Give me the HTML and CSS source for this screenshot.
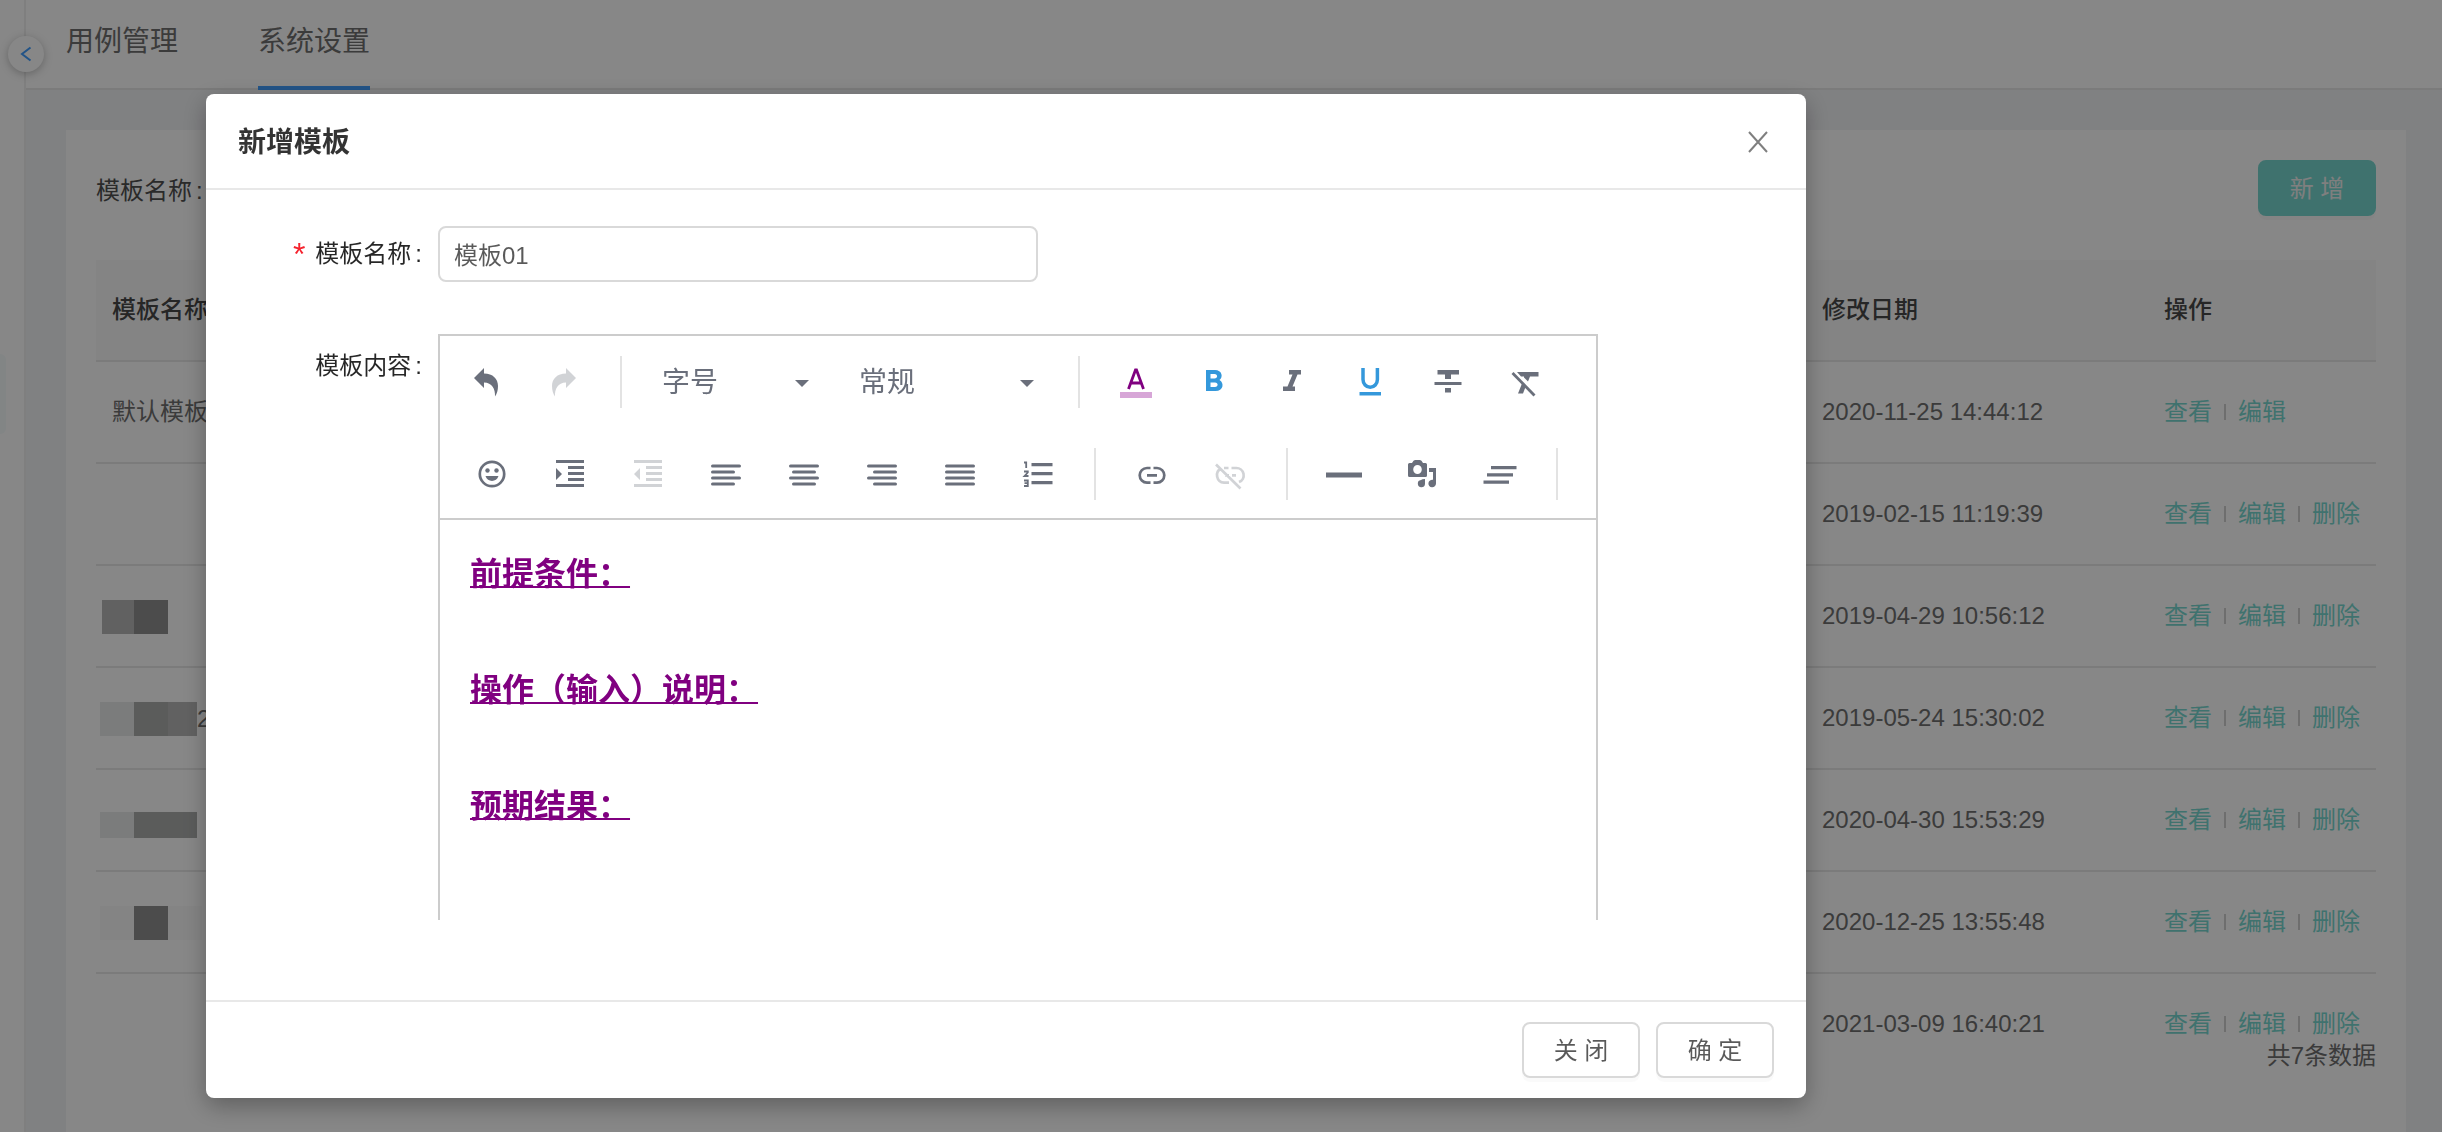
FILE: index.html
```
<!DOCTYPE html>
<html lang="zh-CN">
<head>
<meta charset="utf-8">
<title>系统设置</title>
<link rel="stylesheet" href="styles.css">
</head>
<body>
<div class="app" inert>
  <aside class="sider"><div class="sider-item"></div></aside>
  <button class="collapse" type="button" aria-label="收起">
    <svg width="12" height="16" viewBox="0 0 12 16"><path d="M10.500 1.500L2 8l8.500 6.500" fill="none" stroke="currentColor" stroke-width="2"/></svg>
  </button>
  <div class="main">
    <nav class="tabs">
      <a class="tab" href="#cases">用例管理</a>
      <a class="tab active" href="#settings">系统设置</a>
    </nav>
    <div class="card">
      <div class="search">
        <span class="search-label">模板名称<i class="colon">:</i></span>
        <button class="btn btn-primary" type="button">新 增</button>
      </div>
      <div class="table-wrap">
        <table>
          <colgroup><col class="c-name"><col class="c-date"><col class="c-act"></colgroup>
          <thead><tr><th>模板名称</th><th>修改日期</th><th>操作</th></tr></thead>
          <tbody>
            <tr><td>默认模板</td><td>2020-11-25 14:44:12</td><td><div class="acts"><a href="#v">查看</a><a href="#e">编辑</a></div></td></tr>
            <tr><td></td><td>2019-02-15 11:19:39</td><td><div class="acts"><a href="#v">查看</a><a href="#e">编辑</a><a href="#d">删除</a></div></td></tr>
            <tr><td><div class="mask-text m3"><b class="t2 slim"></b><b class="t4"></b></div></td><td>2019-04-29 10:56:12</td><td><div class="acts"><a href="#v">查看</a><a href="#e">编辑</a><a href="#d">删除</a></div></td></tr>
            <tr><td><div class="mask-text"><b class="t1"></b><b class="t3"></b><b class="t2 narrow"></b><span>2</span></div></td><td>2019-05-24 15:30:02</td><td><div class="acts"><a href="#v">查看</a><a href="#e">编辑</a><a href="#d">删除</a></div></td></tr>
            <tr><td><div class="mask-text short"><b class="t1"></b><b class="t3"></b><b class="t3 narrow"></b></div></td><td>2020-04-30 15:53:29</td><td><div class="acts"><a href="#v">查看</a><a href="#e">编辑</a><a href="#d">删除</a></div></td></tr>
            <tr><td><div class="mask-text"><b class="t0"></b><b class="t4"></b><b class="t0"></b></div></td><td>2020-12-25 13:55:48</td><td><div class="acts"><a href="#v">查看</a><a href="#e">编辑</a><a href="#d">删除</a></div></td></tr>
            <tr><td></td><td>2021-03-09 16:40:21</td><td><div class="acts"><a href="#v">查看</a><a href="#e">编辑</a><a href="#d">删除</a></div></td></tr>
          </tbody>
        </table>
      </div>
      <div class="total">共7条数据</div>
    </div>
  </div>
</div>

<div class="overlay">
  <form class="modal" role="dialog" aria-labelledby="dlg-title">
    <header class="modal-head">
      <h2 id="dlg-title">新增模板</h2>
      <button class="close" type="button" aria-label="关闭">
        <svg width="20" height="22" viewBox="0 0 20 22"><path d="M1 1l18 20M19 1L1 21" fill="none" stroke="currentColor" stroke-width="2"/></svg>
      </button>
    </header>
    <div class="modal-body">
      <div class="field">
        <label class="field-label" for="tpl-name"><span class="req">*</span>模板名称<i class="colon">:</i></label>
        <input class="input" id="tpl-name" type="text" value="模板01">
      </div>
      <div class="field grow">
        <label class="field-label" for="tpl-content">模板内容<i class="colon">:</i></label>
        <div class="editor">
          <div class="toolbar">
            <div class="tools">
              <button class="tool" type="button" aria-label="撤销"><svg viewBox="0 0 36 36"><path d="M6 14L16 4v5.500C25 9.500 30 15 30 22c0 4-1 7.500-3 10.500C27.500 25 24 18.500 16 18.500V24z"/></svg></button>
              <button class="tool off" type="button" aria-label="重做" disabled><svg viewBox="0 0 36 36"><path d="M30 14L20 4v5.500C11 9.500 6 15 6 22c0 4 1 7.500 3 10.500C8.500 25 12 18.500 20 18.500V24z"/></svg></button>
              <span class="sep"></span>
              <button class="drop" type="button">字号<svg class="caret" width="14" height="7" viewBox="0 0 14 7"><path d="M0 0h14L7 7z"/></svg></button>
              <button class="drop wide" type="button">常规<svg class="caret" width="14" height="7" viewBox="0 0 14 7"><path d="M0 0h14L7 7z"/></svg></button>
              <span class="sep"></span>
              <button class="tool" type="button" aria-label="颜色"><svg viewBox="0 0 36 36"><path d="M2 28h32v6H2z" fill="#d7a6d7"/><path d="M10.500 25L17.500 6h1l7 19M13 19h10" fill="none" stroke="#800080" stroke-width="2.800"/></svg></button>
              <button class="tool on" type="button" aria-label="加粗"><svg viewBox="0 0 36 36"><path fill-rule="evenodd" d="M10 6h9c7 0 8.500 7 4.500 10C28.500 19 27.500 27 19.500 27H10zM14.500 10v4.500h4c3.500 0 3.500-4.500 0-4.500zm0 8.500V23h4.500c3.500 0 3.500-4.500 0-4.500z"/></svg></button>
              <button class="tool" type="button" aria-label="斜体"><svg viewBox="0 0 36 36"><path d="M15 6h12v4.500h-3.500L18.500 22.500H21V27H9v-4.500h4.500L18.500 10.500H15z"/></svg></button>
              <button class="tool on" type="button" aria-label="下划线"><svg viewBox="0 0 36 36"><path d="M7.500 28h21.500v3.500H7.500z"/><path d="M11 4v11.500a7.200 7.800 0 0 0 14.400 0V4" fill="none" stroke="currentColor" stroke-width="3.500"/></svg></button>
              <button class="tool" type="button" aria-label="删除线"><svg viewBox="0 0 36 36"><path d="M7.500 6H29v4.500h-8V15h-6v-4.500H7.500zM4.500 18h27v3h-27zM15 24h6v4.500h-6z"/></svg></button>
              <button class="tool" type="button" aria-label="清除样式"><svg viewBox="0 0 36 36"><path d="M9 8h21.500v4.500H22L20 17.500l-4-4V12.500h-3zM14 19.500l3.500 3.500-2.500 6.500h-5z"/><path d="M4.500 9L26.500 31.500" fill="none" stroke="currentColor" stroke-width="2.800"/></svg></button>
            </div>
            <div class="tools second">
              <button class="tool" type="button" aria-label="表情"><svg viewBox="0 0 36 36"><circle cx="18" cy="18" r="12.200" fill="none" stroke="currentColor" stroke-width="2.700"/><circle cx="13.500" cy="14.500" r="2.200"/><circle cx="22.500" cy="14.500" r="2.200"/><path d="M11.500 20h13c-2 6.500-11 6.500-13 0z"/></svg></button>
              <button class="tool" type="button" aria-label="增加缩进"><svg viewBox="0 0 36 36"><path d="M4 4h28v3H4zM16 10h16v3H16zM16 16h16v3H16zM16 22h16v3H16zM4 28h28v3H4zM4 12l6 6-6 6z"/></svg></button>
              <button class="tool off" type="button" aria-label="减少缩进" disabled><svg viewBox="0 0 36 36"><path d="M4 4h28v3H4zM16 10h16v3H16zM16 16h16v3H16zM16 22h16v3H16zM4 28h28v3H4zM10 12l-6 6 6 6z"/></svg></button>
              <button class="tool" type="button" aria-label="居左"><svg viewBox="0 0 36 36"><path class="ln" d="M4.500 10h27M4.500 16h21M4.500 22h27M4.500 28h21"/></svg></button>
              <button class="tool" type="button" aria-label="居中"><svg viewBox="0 0 36 36"><path class="ln" d="M4.500 10h27M7.500 16h21M4.500 22h27M7.500 28h21"/></svg></button>
              <button class="tool" type="button" aria-label="居右"><svg viewBox="0 0 36 36"><path class="ln" d="M4.500 10h27M10.500 16h21M4.500 22h27M10.500 28h21"/></svg></button>
              <button class="tool" type="button" aria-label="两端"><svg viewBox="0 0 36 36"><path class="ln" d="M4.500 10h27M4.500 16h27M4.500 22h27M4.500 28h27"/></svg></button>
              <button class="tool" type="button" aria-label="有序列表"><svg viewBox="0 0 36 36"><path d="M11.500 7h21v3.200h-21zM11.500 16h21v3.200h-21zM11.500 25h21v3.200h-21z"/><path d="M4 6.500h2.200V12M4 15.500h3.800v1L4.500 20H8.500M4 24.500h3.800v5.500H4M4.500 27.200h3" fill="none" stroke="currentColor" stroke-width="1.800"/></svg></button>
              <span class="sep"></span>
              <button class="tool" type="button" aria-label="链接"><svg viewBox="0 0 36 36"><path d="M16.500 12H13a7.300 7.300 0 0 0 0 14.600h3.500M19.500 12H23a7.300 7.300 0 0 1 0 14.600h-3.500M13 19.300h10" fill="none" stroke="currentColor" stroke-width="2.700"/></svg></button>
              <button class="tool off" type="button" aria-label="取消链接" disabled><svg viewBox="0 0 36 36"><path d="M9 12.500a7.500 7.500 0 0 0 3 14.100h5M19.500 12H24a7.300 7.300 0 0 1 3 14.100M12 12h4.500M13 19.300h4M20 19.300h4M4 8.500l24.500 24" fill="none" stroke="currentColor" stroke-width="2.700"/></svg></button>
              <span class="sep"></span>
              <button class="tool" type="button" aria-label="水平线"><svg viewBox="0 0 36 36"><path d="M0 16.500h36v5H0z"/></svg></button>
              <button class="tool" type="button" aria-label="媒体"><svg viewBox="0 0 36 36"><path fill-rule="evenodd" d="M4 8.500Q4 7 5.500 7H8q1.500-3 3-3h5q1.500 0 3 3h2.500Q23 7 23 8.500v11q0 1.500-1.500 1.500h-16Q4 21 4 19.500zM13.500 9a4.300 4.500 0 1 0 0 9 4.300 4.500 0 0 0 0-9z"/><path d="M25 12h7v15.500a3.800 3.800 0 1 1-3-3.700V16h-4zM21 23v5a3.600 3.600 0 1 1-4-4q1-1 4-1z"/></svg></button>
              <button class="tool" type="button" aria-label="清除"><svg viewBox="0 0 36 36"><path d="M9 10h25.500v3.200H9zM5 17.300h26v3.200H5zM1.500 24.600H27v3.200H1.500z"/></svg></button>
              <span class="sep"></span>
            </div>
          </div>
          <div class="content" id="tpl-content" contenteditable="true" spellcheck="false">
            <p>前提条件：</p>
            <p>操作（输入）说明：</p>
            <p>预期结果：</p>
          </div>
        </div>
      </div>
    </div>
    <footer class="modal-foot">
      <button class="btn" type="button">关 闭</button>
      <button class="btn" type="submit">确 定</button>
    </footer>
  </form>
</div>
</body>
</html>
```
FILE: styles.css
```
* { box-sizing: border-box; }
html, body { height: 100%; }
body {
  margin: 0;
  overflow: hidden;
  font: 24px/36px "Liberation Sans", "Noto Sans CJK SC", sans-serif;
  color: rgba(0, 0, 0, .65);
  background: #fff;
}
button, input { font: inherit; color: inherit; }
button { padding: 0; border: 0; background: none; }
a { text-decoration: none; color: inherit; }
svg { display: block; fill: currentColor; }
i { font-style: normal; }
.colon { margin: 0 16px 0 4px; }

.app { display: flex; position: relative; height: 100%; color: #707070; }
.sider { width: 26px; border-right: 2px solid #f0f0f0; padding-top: 354px; }
.sider-item { width: 6px; height: 80px; border-radius: 0 8px 8px 0; background: #f5fbfc; }
.collapse {
  position: absolute;
  left: 8px;
  top: 36px;
  display: grid;
  place-items: center;
  width: 36px;
  height: 36px;
  border-radius: 50%;
  background: #fff;
  color: #409eff;
  box-shadow: 0 2px 8px rgba(0, 0, 0, .25);
}
.main { flex: 1; display: flex; flex-direction: column; background: #f2f3f6; }
.tabs {
  display: flex;
  gap: 80px;
  height: 90px;
  padding-left: 40px;
  border-bottom: 2px solid #e8e8e8;
  background: #fff;
  font-size: 28px;
}
.tab { height: 90px; padding-top: 24px; }
.tab.active { border-bottom: 4px solid #409eff; }

.card { flex: 1; margin: 40px 36px 0 40px; padding: 30px; background: #fff; }
.search { display: flex; justify-content: space-between; align-items: center; height: 56px; margin-bottom: 44px; color: #505050; }
.search-label { padding-top: 6px; }
.btn {
  min-width: 118px;
  height: 56px;
  padding: 2px 28px 0;
  border: 2px solid #d9d9d9;
  border-radius: 8px;
  background: #fff;
  box-shadow: 0 4px 0 rgba(0, 0, 0, .02);
}
.btn-primary { border-color: #78d8d0; background: #78d8d0; color: #f0f0f0; }

.table-wrap { height: 778px; overflow: hidden; }
table { width: 100%; table-layout: fixed; border-collapse: separate; border-spacing: 0; }
.c-name { width: 75%; }
.c-date { width: 15%; }
.c-act { width: 10%; }
th, td { height: 102px; padding: 0 16px; border-bottom: 2px solid #e8e8e8; text-align: left; }
th { background: #fafafa; font-weight: 500; color: #484848; }
.acts { display: flex; align-items: center; color: #78d8d0; }
.acts a + a { display: flex; align-items: center; }
.acts a + a::before { content: ""; width: 2px; height: 16px; margin: 0 12px; background: #d0d0d0; }
.mask-text { display: flex; align-items: center; margin: 2px 0 0 -12px; }
.mask-text.m3 { margin-left: -10px; }
.mask-text b { width: 34px; height: 34px; }
.mask-text .narrow { width: 29px; }
.mask-text .slim { width: 32px; }
.mask-text.short { margin-top: 10px; }
.mask-text.short b { height: 26px; }
.t0 { background: #fafafa; }
.t1 { background: #e8ebea; }
.t2 { background: #b8b8b8; }
.t3 { background: #acaead; }
.t4 { background: #909090; }
.total { text-align: right; }

.overlay {
  position: fixed;
  inset: 0;
  display: flex;
  justify-content: center;
  align-items: flex-start;
  padding: 94px 430px 34px 0;
  background: rgba(0, 0, 0, .47);
}
.modal {
  display: flex;
  flex-direction: column;
  width: 1600px;
  max-width: 100%;
  height: 100%;
  border-radius: 8px;
  background: #fff;
  box-shadow: 0 8px 24px rgba(0, 0, 0, .3);
}
.modal-head {
  display: flex;
  justify-content: space-between;
  align-items: center;
  height: 96px;
  padding: 2px 38px 0 32px;
  border-bottom: 2px solid #e8e8e8;
}
h2 { margin: 0; padding-top: 2px; font-size: 28px; font-weight: 700; color: rgba(0, 0, 0, .8); }
.close { color: rgba(0, 0, 0, .5); }
.modal-body { flex: 1; display: flex; flex-direction: column; gap: 52px; min-height: 0; padding: 36px 32px 80px; }
.field { display: flex; align-items: flex-start; }
.grow { flex: 1; min-height: 0; }
.field-label {
  display: flex;
  justify-content: flex-end;
  align-items: center;
  width: 200px;
  height: 56px;
  color: rgba(0, 0, 0, .85);
}
.grow .field-label { height: 64px; }
.req { margin-right: 10px; font-size: 32px; color: #f5222d; }
.input { width: 600px; height: 56px; padding: 0 14px 2px; border: 2px solid #d9d9d9; border-radius: 8px; background: #fff; }

.editor { align-self: stretch; width: 1160px; border: 2px solid #ccc; border-bottom: 0; overflow: hidden; }
.toolbar { display: grid; gap: 40px; padding: 20px 7px 18px; border-bottom: 2px solid #ccc; color: #6a6f7b; }
.tools { display: flex; align-items: center; height: 52px; }
.second { padding-left: 6px; }
.tool { display: grid; place-items: center; width: 78px; height: 52px; }
.tool svg { width: 36px; height: 36px; }
.off { opacity: .3; }
.on { color: #3498db; }
.ln { fill: none; stroke: currentColor; stroke-width: 3; stroke-linecap: round; }
.sep { width: 2px; height: 52px; margin: 0 17px; background: #e3e3e3; }
.drop { display: flex; justify-content: space-between; align-items: center; width: 197px; height: 52px; padding: 2px 27px 0 23px; font-size: 28px; }
.wide { width: 225px; }
.content { padding: 25px 30px; outline: 0; font-size: 32px; line-height: 58px; font-weight: 700; color: #800080; text-decoration: underline; text-decoration-thickness: 2px; }
.content p { margin: 0 0 58px; }

.modal-foot { display: flex; justify-content: flex-end; gap: 16px; padding: 20px 32px; border-top: 2px solid #e8e8e8; }
```
